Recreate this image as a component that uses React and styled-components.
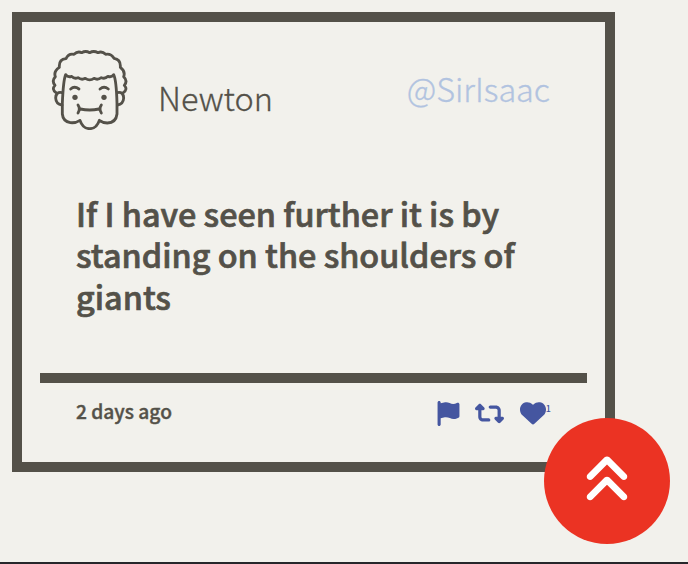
import React from "react";
import styled, { createGlobalStyle } from "styled-components";
import { FaFlag, FaRetweet, FaHeart, FaAnglesUp } from "react-icons/fa6";

const GlobalStyle = createGlobalStyle`
  * { box-sizing: border-box; }
  body {
    margin: 0;
    background: #f2f1ec;
    color: #545149;
    font-family: "Source Sans Pro", "Noto Sans CJK SC", sans-serif;
  }
`;

const Page = styled.main`
  height: 564px;
  padding: 12px;
  border-bottom: 2px solid #26262a;
  overflow: hidden;
`;

const Card = styled.article`
  display: flex;
  flex-direction: column;
  width: 603px;
  height: 460px;
  padding: 0 18px;
  border: 10px solid #545149;
`;

const Header = styled.header`
  display: flex;
  align-items: flex-start;
  padding: 28px 37px 0 10px;
`;

const Avatar = styled.svg`
  flex: none;
  width: 80px;
  height: 80px;
  fill: none;
  stroke: #545149;
  stroke-width: 8.5;
  stroke-linecap: round;
  stroke-linejoin: round;
`;

const Name = styled.span`
  margin: 24px 0 0 28px;
  font-size: 32.4px;
  line-height: 46px;
  font-weight: 300;
  -webkit-text-stroke: 0.3px currentColor;
`;

const Handle = styled.span`
  margin: 15px 0 0 auto;
  font-size: 32.4px;
  line-height: 46px;
  font-weight: 300;
  -webkit-text-stroke: 0.3px currentColor;
  color: #b1c3e0;
`;

const Quote = styled.p`
  flex: 1;
  margin: 61.8px 36px 0;
  font-size: 32.4px;
  line-height: 41.4px;
  font-weight: 500;
  -webkit-text-stroke: 0.7px currentColor;
  white-space: nowrap;
`;

const Footer = styled.footer`
  display: flex;
  align-items: center;
  justify-content: space-between;
  height: 89px;
  padding: 0 36px 20px;
  border-top: 10px solid #545149;
`;

const Time = styled.time`
  margin-top: -3px;
  font-size: 19.2px;
  line-height: 24px;
  font-weight: 500;
  -webkit-text-stroke: 0.4px currentColor;
`;

const Actions = styled.div`
  display: flex;
  align-items: center;
  color: #4556a0;
`;

const Action = styled.span`
  display: flex;
  margin: 1px 0 0 ${(p) => p.$gap || 0}px;
  svg { display: block; }
`;

const Count = styled.span`
  height: 18px;
  font-size: 9px;
  line-height: 9px;
  font-weight: 500;
`;

const TopButton = styled.button`
  position: fixed;
  left: 544px;
  top: 418px;
  display: grid;
  place-items: center;
  width: 126px;
  height: 126px;
  padding: 0 0 2px;
  border: 0;
  border-radius: 50%;
  background: #eb3323;
  color: #fff;
`;

function NewtonAvatar() {
  return (
    <Avatar viewBox="30 30 240 240" aria-label="Newton">
      <path d="M48 158 Q34 148 45 136 Q34 122 46 110 Q40 94 58 82 Q56 58 78 56 Q86 39 102 43 Q113 32 125 38 Q137 31 149 38 Q161 31 174 38 Q186 32 197 43 Q213 40 222 55 Q243 58 241 82 Q257 94 251 110 Q264 122 253 136 Q264 148 250 158" />
      <path d="M67 222 L67 190 Q70 120 77 104 Q84 113 95 109 Q103 118 114 113 Q125 121 136 115 Q149 124 162 115 Q173 121 184 113 Q195 118 204 109 Q214 113 221 104 Q229 120 231 190 L231 222 Q228 248 202 249 Q189 249 178 241 Q170 266 149 266 Q128 266 120 241 Q106 250 91 248 Q69 244 67 222 Z" />
      <path d="M66 158 Q48 154 47 174 Q48 193 66 195 M232 158 Q250 154 251 174 Q250 193 232 195" />
      <path d="M92 147 Q103 137 117 147 M180 147 Q192 137 205 147 M121 207 Q149 213 177 207 M114 195 Q122 207 114 219 M184 195 Q176 207 184 219" />
      <circle cx="105" cy="172" r="8" fill="#545149" stroke="none" />
      <circle cx="192" cy="172" r="8" fill="#545149" stroke="none" />
    </Avatar>
  );
}

export default function App() {
  return (
    <Page>
      <GlobalStyle />
      <Card>
        <Header>
          <NewtonAvatar />
          <Name>Newton</Name>
          <Handle>@SirIsaac</Handle>
        </Header>
        <Quote>
          If I have seen further it is by
          <br />
          standing on the shoulders of
          <br />
          giants
        </Quote>
        <Footer>
          <Time>2 days ago</Time>
          <Actions>
            <Action><FaFlag size={25} /></Action>
            <Action $gap={14}><FaRetweet size={29} /></Action>
            <Action $gap={16}><FaHeart size={26} /></Action>
            <Count>1</Count>
          </Actions>
        </Footer>
      </Card>
      <TopButton aria-label="Back to top">
        <FaAnglesUp size={54} />
      </TopButton>
    </Page>
  );
}
